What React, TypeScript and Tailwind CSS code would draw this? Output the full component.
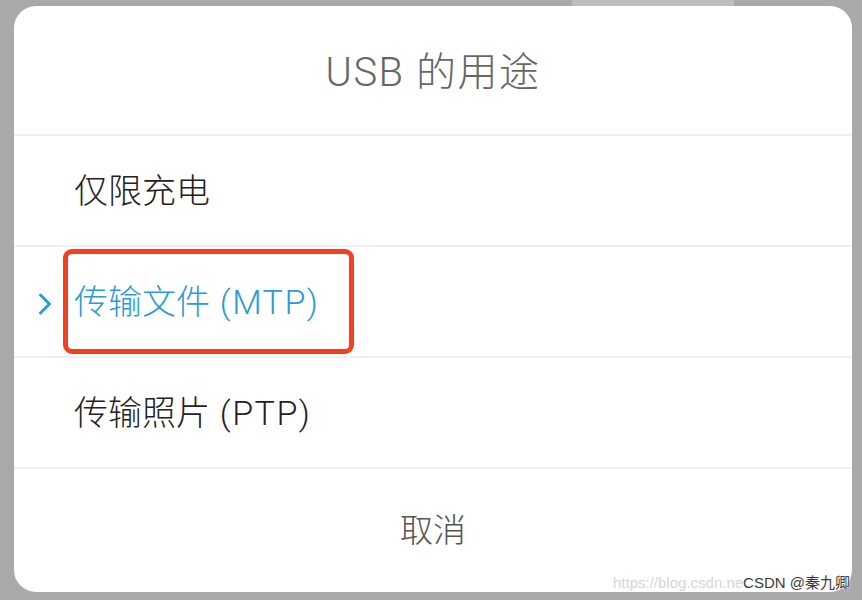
import React from "react";

const font = { fontFamily: 'Roboto, "Noto Sans CJK SC", "Noto Sans", sans-serif' };

function Option({ cjk, latin, active }: { cjk: string; latin?: string; active?: boolean }) {
  return (
    <div className="relative flex h-[111px] items-center border-b-[2px] border-[#efefef] pl-[60px]">
      {active && (
        <svg className="absolute left-[23px] top-[45px]" width="16" height="24" viewBox="0 0 16 24" fill="none">
          <path d="M3.5 3 L12.5 12 L3.5 21" stroke="#2a9bd8" strokeWidth="3" strokeLinecap="round" strokeLinejoin="round" />
        </svg>
      )}
      <span className={"text-[34px] font-light leading-none " + (active ? "text-[#2a9bd8]" : "text-[#222222]")}>
        {cjk}
        {latin && <span className="tracking-[1.5px]"> {latin}</span>}
      </span>
    </div>
  );
}

export default function App() {
  return (
    <div className="relative h-[600px] w-[862px] overflow-hidden bg-[#a9a9a9] pl-[14px] pt-[6px]" style={font}>
      {/* peek of the settings page behind the dialog */}
      <div className="absolute left-[572px] top-0 h-[6px] w-[162px] bg-[#bdbdbd]" />

      <div className="flex h-[586px] w-[838px] flex-col overflow-hidden rounded-[22px] bg-white">
        <div className="flex h-[130px] items-center justify-center border-b-[2px] border-[#efefef] pt-[6px]">
          <span className="text-[40px] font-light leading-none tracking-[1.5px] text-[#666666]">USB 的用途</span>
        </div>
        <Option cjk="仅限充电" />
        <Option cjk="传输文件" latin="(MTP)" active />
        <Option cjk="传输照片" latin="(PTP)" />
        <div className="flex flex-1 items-center justify-center">
          <span className="text-[33px] font-light leading-none text-[#555555]">取消</span>
        </div>
      </div>

      {/* annotation box */}
      <div className="absolute left-[63px] top-[249px] h-[105px] w-[291px] rounded-[9px] border-[5px] border-[#f4401f]" />

      {/* watermark */}
      <div className="absolute bottom-[10px] right-[12px] flex items-end text-[15px] leading-none" style={{ fontFamily: '"Liberation Sans", "Noto Sans CJK SC", sans-serif' }}>
        <span className="text-[#d6d6d6]">https://blog.csdn.ne</span>
        <span className="text-[#3a3a3a]" style={{ textShadow: "0 0 2px #fff, 0 0 2px #fff" }}>CSDN @秦九卿</span>
      </div>
    </div>
  );
}
